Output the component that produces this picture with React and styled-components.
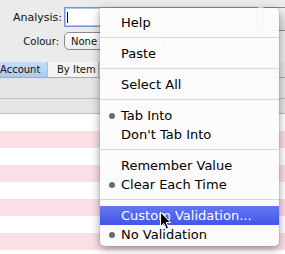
import React from 'react';
import styled, { createGlobalStyle } from 'styled-components';

const Global = createGlobalStyle`
  html, body { margin: 0; padding: 0; }
  body { background: #ebebeb; font-family: "DejaVu Sans", "Liberation Sans", sans-serif; }
`;

const Window = styled.div`
  position: relative;
  width: 285px;
  height: 254px;
  overflow: hidden;
  background: #ebebeb;
  display: flex;
  flex-direction: column;
`;

const Form = styled.div`
  flex: none;
  display: grid;
  grid-template-columns: 63px 1fr;
  grid-template-rows: 20px 18px;
  align-content: start;
  row-gap: 5px;
  padding-top: 7px;
  height: 62px;
  box-sizing: border-box;
`;

const Label = styled.span`
  justify-self: end;
  align-self: center;
  padding-right: ${p => p.$pad}px;
  font-size: ${p => p.$size}px;
  color: #111;
  white-space: nowrap;
`;

const FieldCell = styled.div`
  display: flex;
  align-items: flex-start;
  gap: 4px;
  padding-left: 1px;
`;

const TextField = styled.div`
  width: 194px;
  height: 20px;
  box-sizing: border-box;
  background: #fff;
  border: 1px solid #7396d2;
  box-shadow: inset 0 0 0 1px #a9c5ee;
  display: flex;
  align-items: center;
  padding-left: 2px;
`;

const Caret = styled.span`
  width: 1px;
  height: 11px;
  background: #000;
`;

const SideButton = styled.div`
  width: 40px;
  height: 24px;
  flex: none;
  box-sizing: border-box;
  border: 1px solid #8c8c8c;
  border-radius: 3px;
  background: linear-gradient(#f4f4f4, #dcdcdc);
`;

const PopUp = styled.div`
  width: 100px;
  height: 18px;
  box-sizing: border-box;
  border: 1px solid #8a8a8a;
  border-radius: 5px;
  background: linear-gradient(#ffffff, #ececec);
  font-size: 10px;
  color: #111;
  display: flex;
  align-items: center;
  padding-left: 6px;
`;

const TabBar = styled.div`
  flex: none;
  display: flex;
  height: 16px;
  box-sizing: border-box;
  background: #e4e4e4;
  border-bottom: 1px solid #a9a9a9;
`;

const Tab = styled.div`
  flex: none;
  width: ${p => p.$w}px;
  margin-left: ${p => p.$ml || 0}px;
  box-sizing: border-box;
  padding-left: 9px;
  font-size: 10px;
  line-height: 15px;
  color: #111;
  white-space: nowrap;
  background: ${p => (p.$active ? 'linear-gradient(#c6ddf6, #a9cbf1)' : '#f3f3f3')};
  border-right: 1px solid ${p => (p.$active ? '#9fbfe4' : '#b3b3b3')};
`;

const Band = styled.div`
  height: ${p => p.$h}px;
  flex: none;
  background: #e5e5e5;
  border-bottom: 1px solid #bdbdbd;
`;

const Rows = styled.div`
  flex: none;
  display: flex;
  flex-direction: column;
`;

const Row = styled.div`
  height: 17px;
  flex: none;
  background: ${p => (p.$odd ? '#fadfe4' : '#ffffff')};
`;

const Menu = styled.div`
  position: absolute;
  left: 100px;
  top: 8px;
  width: 179px;
  box-sizing: border-box;
  padding: 5px 0 2px;
  background: rgba(252, 252, 252, 0.95);
  border-radius: 0 4px 5px 5px;
  box-shadow: 0 3px 10px rgba(0, 0, 0, 0.38), 0 0 0 1px rgba(0, 0, 0, 0.06);
  font-size: 13px;
`;

const Item = styled.div`
  position: relative;
  height: 19px;
  line-height: 19px;
  padding-left: 21px;
  color: ${p => (p.$hi ? '#fff' : '#000')};
  background: ${p => (p.$hi ? 'linear-gradient(#6577f3, #4156e8)' : 'transparent')};
  white-space: nowrap;
`;

const Bullet = styled.span`
  position: absolute;
  left: 9px;
  top: 7px;
  width: 6px;
  height: 6px;
  border-radius: 50%;
  background: #6b6b6b;
`;

const Separator = styled.div`
  height: 1px;
  margin: 5px 0 6px;
  background: #d8d8d8;
`;

const Pointer = styled.svg`
  position: absolute;
  left: 159px;
  top: 211px;
`;

const menu = [
  [{ t: 'Help' }],
  [{ t: 'Paste' }],
  [{ t: 'Select All' }],
  [{ t: 'Tab Into', b: true }, { t: "Don't Tab Into" }],
  [{ t: 'Remember Value' }, { t: 'Clear Each Time', b: true }],
  [{ t: 'Custom Validation...', hi: true }, { t: 'No Validation', b: true }],
];

export default function App() {
  return (
    <>
      <Global />
      <Window>
        <Form>
          <Label $pad={1} $size={11}>Analysis:</Label>
          <FieldCell>
            <TextField><Caret /></TextField>
            <SideButton />
          </FieldCell>
          <Label $pad={4} $size={10}>Colour:</Label>
          <FieldCell>
            <PopUp>None</PopUp>
          </FieldCell>
        </Form>
        <TabBar>
          <Tab $active $w={57} $ml={-9}>Account</Tab>
          <Tab $w={51}>By Item</Tab>
        </TabBar>
        <Band $h={20} />
        <Band $h={14} />
        <Rows>
          {Array.from({ length: 9 }).map((_, i) => (
            <Row key={i} $odd={i % 2 === 1} />
          ))}
        </Rows>
        <Menu>
          {menu.map((group, gi) => (
            <React.Fragment key={gi}>
              {gi > 0 && <Separator />}
              {group.map(it => (
                <Item key={it.t} $hi={it.hi}>
                  {it.b && <Bullet />}
                  {it.t}
                </Item>
              ))}
            </React.Fragment>
          ))}
        </Menu>
        <Pointer width="13" height="20" viewBox="0 0 13 20">
          <path d="M1.5 1 L1.5 15.5 L4.8 12.4 L7.3 18.2 L9.6 17.2 L7.1 11.5 L11.6 11.5 Z" fill="#000" stroke="#fff" strokeWidth="1" strokeLinejoin="round" />
        </Pointer>
      </Window>
    </>
  );
}
